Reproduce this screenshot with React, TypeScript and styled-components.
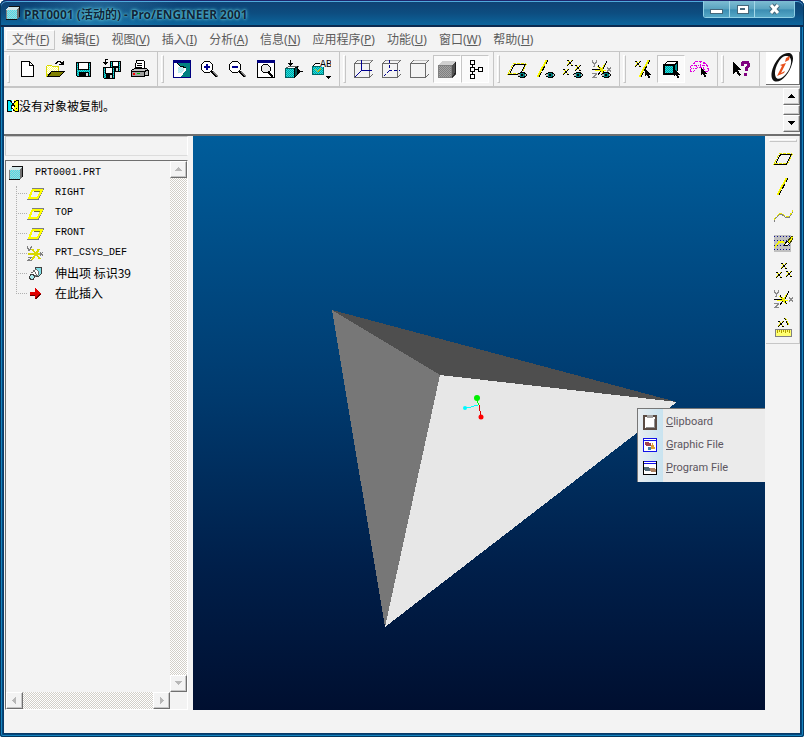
import React from "react";
import styled, { createGlobalStyle, css } from "styled-components";

const FACE = "#f3f3f3";
const SHADOW = "#c6c6c6";
const DARK = "#6f6f6f";
const UI_FONT = '"Noto Sans", "Noto Sans CJK SC", sans-serif';
const MONO_FONT = '"Liberation Mono", "Noto Sans CJK SC", monospace';

const GlobalStyle = createGlobalStyle`
  *, *::before, *::after { box-sizing: border-box; }
  body { margin: 0; background: #fff; }
  button { font: inherit; color: inherit; padding: 0; border: 0; background: none; }
  svg { display: block; }
`;

const raised = css`
  border: 1px solid;
  border-color: #fff ${DARK} ${DARK} #fff;
  box-shadow: inset -1px -1px 0 ${SHADOW};
`;

/* ---------- window frame ---------- */

const Frame = styled.div`
  min-height: 100vh;
  display: flex;
  flex-direction: column;
  padding: 0 4px 4px;
  border-radius: 6px 6px 3px 3px;
  background: linear-gradient(#0f3c6b, #0b5f97 24px, #063a68 80px);
  box-shadow: inset 0 0 0 1px #03365e, inset 0 0 0 2px #1784bf, inset 0 0 0 3px #04477b;
  overflow: hidden;
`;

const TitleBar = styled.header`
  height: 27px;
  flex: none;
  margin: 0 -3px;
  padding: 0 8px 0 5px;
  display: flex;
  align-items: center;
  border-top: 1px solid #20256b;
  border-bottom: 2px solid #0a2a50;
  border-radius: 6px 6px 0 0;
  box-shadow: inset 0 1px 0 #4fa9dc;
  background: linear-gradient(115deg, transparent 4%, rgba(90, 190, 230, 0.25) 12%, transparent 22%),
    linear-gradient(#0f4273, #0d4d80 50%, #0c659c);
`;

const Title = styled.h1`
  margin: 0 0 0 4px;
  padding-top: 3px;
  flex: 1;
  font: bold 12px/16px ${UI_FONT};
  color: #10263a;
  white-space: nowrap;
  text-shadow: 0 0 1px #5fc6d8, 0 0 3px #5fc6d8, 0 0 4px #48a8c4;
`;

const WindowControls = styled.div`
  display: flex;
  align-self: flex-start;
  height: 17px;
  border: 1px solid #8fd0e6;
  border-top: 0;
  border-radius: 0 0 3px 3px;
  overflow: hidden;
`;

const ControlButton = styled.button<{ $wide?: boolean }>`
  width: ${(p) => (p.$wide ? 40 : 25)}px;
  display: grid;
  place-items: center;
  background: linear-gradient(#7dbcd2, #5aa3c0 50%, #3b8db2 55%, #54a7c6);
  & + & { border-left: 1px solid #a4d8e8; }
`;

const Body = styled.div`
  flex: 1;
  display: flex;
  flex-direction: column;
  background: ${FACE};
`;

/* ---------- menu ---------- */

const MenuBar = styled.nav`
  height: 25px;
  flex: none;
  display: flex;
  align-items: center;
  padding: 2px 2px 0;
  border-bottom: 1px solid ${SHADOW};
  font: 12px/18px ${UI_FONT};
  color: #5c5c5c;
`;

const MenuItem = styled.button<{ $active?: boolean }>`
  height: 20px;
  padding: 0 5px;
  white-space: nowrap;
  border: 1px solid transparent;
  ${(p) => p.$active && css`border-color: #fff ${SHADOW} ${SHADOW} #fff;`}
`;

const Key = styled.u`
  text-underline-offset: 1px;
`;

/* ---------- toolbars ---------- */

const ToolBar = styled.div`
  height: 36px;
  flex: none;
  display: flex;
  align-items: stretch;
  border-bottom: 2px solid ${SHADOW};
`;

const ToolGroup = styled.div`
  display: flex;
  align-items: center;
  padding: 0 4px 0 3px;
  border-right: 1px solid ${SHADOW};
`;

const Grip = styled.span`
  width: 3px;
  height: 28px;
  margin-right: 3px;
  border: 1px solid;
  border-color: #fff ${SHADOW} ${SHADOW} #fff;
`;

const ToolButton = styled.button<{ $pressed?: boolean }>`
  width: 28px;
  height: 28px;
  display: grid;
  place-items: center;
  ${(p) =>
    p.$pressed &&
    css`
      background: #fafafa;
      border: 1px solid;
      border-color: ${SHADOW} #fff #fff ${SHADOW};
    `}
`;

const Logo = styled.div`
  width: 34px;
  margin: 0 0 1px auto;
  background: #fff;
  border-right: 1px solid ${DARK};
  border-bottom: 1px solid ${DARK};
`;

/* ---------- message area ---------- */

const MessageArea = styled.section`
  height: 48px;
  flex: none;
  display: flex;
  border-bottom: 2px solid ${DARK};
`;

const Message = styled.p`
  flex: 1;
  margin: 0;
  padding: 9px 0 0 3px;
  display: flex;
  align-items: flex-start;
  font: 12px/18px "Noto Sans CJK SC", sans-serif;
  color: #000;
  svg { margin: 3px 0 0; }
`;

const MessageScroll = styled.div`
  width: 17px;
  display: flex;
  flex-direction: column;
  padding-bottom: 2px;
`;

const ScrollThumb = styled.div`
  ${raised}
  flex: 1;
`;

const ArrowButton = styled.button`
  ${raised}
  width: 17px;
  height: 17px;
  flex: none;
  display: grid;
  place-items: center;
  background: ${FACE};
`;

/* ---------- workspace ---------- */

const Workspace = styled.main`
  flex: 1;
  display: flex;
  margin-bottom: 23px;
`;

const SidePanel = styled.aside`
  width: 183px;
  flex: none;
  margin: 0 5px 0 1px;
  display: flex;
  flex-direction: column;
  gap: 4px;
`;

const PanelHeader = styled.div`
  height: 20px;
  border: 1px solid;
  border-color: ${SHADOW} #fff #dcdcdc ${SHADOW};
`;

const TreeBox = styled.div`
  flex: 1;
  display: grid;
  grid-template: 1fr 17px / 1fr 17px;
  border: 1px solid;
  border-color: ${DARK} #fff #fff ${DARK};
`;

const dither = css`
  background: repeating-conic-gradient(#d2cfc8 0 25%, #fff 0 50%) 0 0 / 2px 2px;
`;

const ScrollBar = styled.div<{ $horizontal?: boolean }>`
  ${dither}
  display: flex;
  flex-direction: ${(p) => (p.$horizontal ? "row" : "column")};
  justify-content: space-between;
`;

const Tree = styled.ul`
  margin: 0;
  padding: 2px 0 0 3px;
  list-style: none;
  font: 10px/20px ${MONO_FONT};
  color: #000;
`;

const Branches = styled.ul`
  margin: 0 0 0 7px;
  padding: 0;
  list-style: none;
  position: relative;
  &::before {
    content: "";
    position: absolute;
    left: 0;
    top: 3px;
    bottom: 9px;
    border-left: 1px dotted #b0b0b0;
  }
`;

const Root = styled.div`
  display: flex;
  align-items: center;
  gap: 12px;
  height: 20px;
`;

const Branch = styled.li`
  display: flex;
  align-items: center;
  height: 20px;
  &::before {
    content: "";
    width: 11px;
    border-top: 1px dotted #b0b0b0;
  }
  svg { margin-right: 11px; }
`;

const Hanzi = styled.span`
  font: 12px/20px "Noto Sans CJK SC", sans-serif;
`;

const Viewport = styled.section`
  flex: 1;
  position: relative;
  background: linear-gradient(#005d9b, #003a6e 45%, #001f4a 75%, #000f30);
`;

const Scene = styled.svg`
  position: absolute;
  inset: 0;
  width: 100%;
  height: 100%;
`;

const ContextMenu = styled.menu`
  position: absolute;
  right: 0;
  top: 272px;
  width: 128px;
  margin: 0;
  padding: 1px 0 3px 1px;
  list-style: none;
  border-top: 1px solid #777;
  border-left: 1px solid #777;
  background: linear-gradient(90deg, #e9edf0 0, #c8e3f0 25px, #ebebeb 25px);
  font: 11px/23px Roboto, sans-serif;
  color: #5c5660;
`;

const ContextItem = styled.button`
  width: 100%;
  height: 23px;
  display: flex;
  align-items: center;
  gap: 8px;
  padding-left: 3px;
  text-align: left;
`;

const FeatureBar = styled.aside`
  width: 34px;
  flex: none;
  align-self: flex-start;
  display: flex;
  flex-direction: column;
  align-items: center;
  margin-left: 1px;
  padding: 3px 0 2px;
  border-right: 1px solid ${SHADOW};
  border-bottom: 1px solid ${SHADOW};
`;

const BarHandle = styled.span`
  width: 28px;
  height: 3px;
  margin-bottom: 3px;
  border: 1px solid;
  border-color: #fff ${SHADOW} ${SHADOW} #fff;
`;

/* ---------- icons ---------- */

const Icon = ({ children, size = 20 }: { children: React.ReactNode; size?: number }) => (
  <svg width={size} height={size} viewBox={`0 0 ${size} ${size}`} shapeRendering="crispEdges" fill="none" aria-hidden="true">
    {children}
  </svg>
);

const Patterns = () => (
  <svg width="0" height="0" aria-hidden="true">
    <defs>
      {[
        ["teal", "#00a0a0", "#20e0e0"],
        ["cyan", "#48dce6", "#a4d4da"],
        ["grey", "#808080", "#a4a4a4"],
        ["straw", "#ffff80", "#ffffff"],
      ].map(([id, a, b]) => (
        <pattern key={id} id={id} width="2" height="2" patternUnits="userSpaceOnUse">
          <path fill={b} d="M0 0h2v2H0z" />
          <path fill={a} d="M0 0h1v1H0zM1 1h1v1H1z" />
        </pattern>
      ))}
    </defs>
  </svg>
);

const HiddenDefs = styled.div`
  height: 0;
  overflow: hidden;
`;

const Eye = ({ x = 10, y = 13 }) => (
  <g>
    <path fill="#000" d={`M${x} ${y + 3}v-1h1v-1h2v-1h5v1h1v1h1v2h-1v1h-1v1h-5v-1h-2v-1z`} />
    <path fill="#c0c0c0" d={`M${x + 1} ${y + 2}h2v2h-2zM${x + 8} ${y + 2}h1v2h-1z`} />
    <path fill="#008080" d={`M${x + 3} ${y + 1}h4v1h1v2h-1v1h-4z`} />
    <path fill="#000" d={`M${x + 4} ${y + 2}h2v2h-2z`} />
  </g>
);

const Cursor = ({ x = 12, y = 10 }) => (
  <path fill="#000" d={`M${x} ${y}h1v1h1v1h1v1h1v1h1v1h1v1h-2v1h1v2h-2v-2h-1v-1h-1v1h-1z`} />
);

/** Datum point cross: black pixels with yellow ones between them. */
const Mark = ({ x, y }: { x: number; y: number }) => (
  <g>
    <path
      fill="#000"
      d={`M${x} ${y}h2v1h-2zM${x + 2} ${y + 2}h1v1h-1zM${x + 3} ${y + 3}h1v1h-1zM${x + 4} ${y + 5}h2v1h-2zM${x + 5} ${y}h1v1h-1zM${x + 3} ${y + 2}h1v-1h1v1h-1v1h-1zM${x} ${y + 5}h1v1h-1zM${x + 1} ${y + 4}h1v-1h1v1h-1v1h-1z`}
    />
    <path
      fill="#e8e800"
      d={`M${x + 1} ${y + 1}h1v1h-1zM${x + 4} ${y}h1v1h-1zM${x + 2} ${y + 1}h1v1h-1zM${x} ${y + 4}h1v1h-1zM${x + 1} ${y + 3}h1v1h-1zM${x + 4} ${y + 4}h1v1h-1z`}
    />
  </g>
);

const AxisLine = ({ x = 4, y = 1 }) => (
  <g>
    <path stroke="#ffff00" d={`M${x + 8} ${y}l-9 17`} />
    <path stroke="#e8e800" d={`M${x + 9} ${y}l-9 17`} />
    <path stroke="#000" strokeDasharray="5 2" d={`M${x + 10} ${y}l-9 17`} />
  </g>
);

const CsysShape = () => (
  <g>
    <path stroke="#8a8a8a" d="M1.500 1v2l2 2M5.500 1v2l-2 2v2H2M1 14.500h5M5.500 15l-4 4M1 18.500h5M16 8.500l4 4M20 8.500l-4 4" />
    <path stroke="#ffff00" d="M4 11.500h11M6.500 7.500l7 8M13.500 5l-6 11M9.500 8.500l4 4" />
    <path fill="#e8e800" d="M9 9h3v4H9z" />
    <path stroke="#000" d="M1 10.500h8M12 9.500l4-7M12 12.500l2.500 3M7 6.500l2.500 3M9.500 12.500l-3 4" />
  </g>
);

const PlaneShape = () => (
  <g>
    <path stroke="#000" d="M7 5.500h11M1 15.500h13M2.500 15l5-9.500M13.500 15l5-9.500" />
    <path stroke="#e8e800" strokeDasharray="3 1" d="M6 4.500h13M.5 16l5.500-11M2 14.500h11" />
    <path stroke="#e8e800" strokeDasharray="2 1" d="M14.500 15l5-10" />
  </g>
);

const Floppy = ({ x, y, s }: { x: number; y: number; s: number }) => {
  const half = Math.floor(s / 2);
  return (
    <g>
      <path fill="#000" d={`M${x} ${y}h${s}v${s}h${1 - s}v-1h-1z`} />
      <path fill="url(#teal)" d={`M${x + 1} ${y + 1}h${s - 2}v${s - 2}h${2 - s}z`} />
      <path fill="#000" d={`M${x + 2} ${y}h${s - 4}v${half + 1}h${4 - s}z`} />
      <path fill="#fff" d={`M${x + 3} ${y + 1}h${s - 6}v${half - 1}h${6 - s}z`} />
      <path fill="#000" d={`M${x + 3} ${y + s - 5}h${s - 5}v5h${5 - s}z`} />
      <path fill="#d8d8d8" d={`M${x + s - 5} ${y + s - 4}h2v3h-2z`} />
    </g>
  );
};

const Glass = ({ sign }: { sign: "plus" | "minus" }) => (
  <Icon>
    <path fill="#fff" stroke="#000" d="M5.500 2.500h5l3 3v5l-3 3h-5l-3-3v-5z" />
    <path stroke="#000090" strokeWidth="2" d={sign === "plus" ? "M5 8h6M8 5v6" : "M5 8h6"} />
    <path stroke="#000" strokeWidth="2" d="M12 12l6 6" />
    <path stroke="#808080" d="M14 12.500l5 5" />
  </Icon>
);

const CubeFrame = ({ children }: { children?: React.ReactNode }) => (
  <Icon>
    <path stroke="#6a6a6a" d="M1.500 4.500h15v14h-15zM1.500 4.500l3-3M16.500 4.500l3-3M16.500 18.500l3-3" />
    {children}
  </Icon>
);

const CubeSolid = () => (
  <Icon size={14}>
    <path fill="#d4e6e8" d="M0 3l3-2h11l-2 3H0z" />
    <path fill="url(#cyan)" d="M0 4h11v10H0z" />
    <path fill="#707070" d="M11 4l2-3v10l-2 3z" />
    <path stroke="#101010" d="M3 .5h10.500V11M0 13.500h11" />
    <path stroke="#808080" d="M.5 4v9" />
  </Icon>
);

const TreePlane = () => (
  <Icon size={17}>
    <path stroke="#808080" d="M5 3.500h11.500l-5 11H0" />
    <path stroke="#ffff00" strokeWidth="2" d="M5.500 5H15L10.500 13H2z" />
    <path stroke="#77773a" d="M7 6.500h6" />
  </Icon>
);

const icons: Record<string, React.ReactNode> = {
  new: (
    <Icon>
      <path fill="#fff" stroke="#000" d="M4.500 2.500h8l4 4v11h-12zM12.500 2.500v4h4" />
    </Icon>
  ),
  open: (
    <Icon>
      <path fill="url(#straw)" stroke="#d8d800" d="M1.500 17V7.500l1-1h4l1 1h6v5h-7z" />
      <path stroke="#000" d="M2 17.500h13" />
      <path fill="#808000" stroke="#000" d="M2.500 17.500l4-5h13l-5 5z" />
      <path stroke="#000" d="M10 4.500h1v-1h1v-1h3v1h2v2M14 5.500h5M16 4.500h3M18.500 2v4" />
    </Icon>
  ),
  save: <Icon><Floppy x={3} y={3} s={15} /></Icon>,
  saveAll: (
    <Icon>
      <Floppy x={9} y={2} s={11} />
      <Floppy x={2} y={8} s={12} />
      <path stroke="#000" d="M7 .5H4.500V6M2 3.500h5M3 4.500h3" />
    </Icon>
  ),
  print: (
    <Icon>
      <path fill="#fff" stroke="#000" d="M5.500 11l2-9.500h7l1 1v8.500z" />
      <path stroke="#000" d="M8 4.500h5M8 6.500h5M7 8.500h6" />
      <path fill="#c0c0c0" stroke="#000" d="M2.500 11.500l3-2h12l2 2v5h-17z" />
      <path fill="#a0a0a0" stroke="#000" d="M2.500 12.500h13v5h-13zM15.500 12.500l4-2" />
      <path fill="#f00" d="M4 14h2v2H4z" />
      <path fill="#00c000" d="M8 14h3v1H8z" />
    </Icon>
  ),
  repaint: (
    <Icon>
      <path fill="#008080" stroke="#000080" d="M2.500 2.500h17v16h-17z" />
      <path fill="#000080" d="M2 1h18v3H2z" />
      <path fill="#fff" d="M3 4h3l4 3 5 1v3l-5 7H3z" />
      <path fill="url(#cyan)" d="M7 8h6v3l-3 3H7z" opacity=".5" />
      <path stroke="#000" d="M6 4.500l4 3 5 1" />
    </Icon>
  ),
  zoomIn: <Glass sign="plus" />,
  zoomOut: <Glass sign="minus" />,
  refit: (
    <Icon>
      <path fill="#fff" stroke="#000" d="M2.500 2.500h17v16h-17z" />
      <path fill="#000080" d="M2 1h18v3H2z" />
      <path fill="#e8e8e8" stroke="#000" d="M8.500 5.500h4l3 3v3l-2 2h-5l-2-2v-4z" />
      <path stroke="#000" strokeWidth="2" d="M13 13l5 5" />
    </Icon>
  ),
  orient: (
    <Icon>
      <path fill="#fff" stroke="#606060" d="M2.500 9.500l3-2h10l-3 2z" />
      <path fill="url(#teal)" stroke="#006060" d="M2.500 9.500h9v9h-9z" />
      <path fill="#005050" stroke="#000" d="M11.500 9.500l3-2v8l-3 3z" />
      <path stroke="#000" d="M7.500 1v6M5 4.500h5M6 5.500h3M14 12.500h6M15.500 10v5M16.500 11v3" />
    </Icon>
  ),
  views: (
    <Icon>
      <path fill="#fff" stroke="#000" d="M1.500 7.500l3-3h6v3z" />
      <path fill="url(#teal)" stroke="#006868" d="M1.500 7.500h11v8h-11z" />
      <path stroke="#b0b020" d="M4 10.500l3 2 3-3" />
      <path fill="#f3f3f3" d="M9 0h11v8H9z" />
      <text x="9" y="8" fill="#000" fontFamily="Liberation Mono, monospace" fontSize="10">AB</text>
      <path fill="#000" d="M14 17h6l-3 3z" />
    </Icon>
  ),
  wire: (
    <CubeFrame>
      <path stroke="#a0a0a0" d="M5 1.500h14" />
      <path stroke="#000090" d="M8.500 1v10.500M8 11.500h11M8.500 11.500l-7 7" />
    </CubeFrame>
  ),
  hiddenLine: (
    <CubeFrame>
      <path stroke="#a0a0a0" d="M5 1.500h14" />
      <path stroke="#000090" strokeDasharray="3 2" d="M8.500 1v10.500M8 11.500h11M8.500 11.500l-7 7" />
    </CubeFrame>
  ),
  noHidden: <CubeFrame><path stroke="#c0c0c0" d="M5 1.500h14" /></CubeFrame>,
  shaded: (
    <Icon>
      <path fill="#d0d0d0" d="M1 6l4-4h14l-4 4z" />
      <path fill="url(#grey)" stroke="#808080" d="M1.500 6.500h13v12h-13z" />
      <path fill="#505050" d="M15 6l4-4v13l-4 4z" />
      <path stroke="#202020" d="M18.500 3v11l-3 4" />
    </Icon>
  ),
  tree: (
    <Icon>
      <path stroke="#000" fill="#fff" d="M5.500 1.500h4v4h-4zM5.500 8.500h4v4h-4zM5.500 15.500h4v4h-4zM13.500 8.500h4v4h-4z" />
      <path stroke="#000" d="M7.500 6v2M7.500 13v2M10 10.500h3" />
    </Icon>
  ),
  planeEye: <Icon><PlaneShape /><Eye /></Icon>,
  axisEye: <Icon><AxisLine x={3} /><Eye /></Icon>,
  pointsEye: <Icon><Mark x={4} y={1} /><Mark x={0} y={10} /><Mark x={12} y={6} /><Eye /></Icon>,
  csysEye: <Icon><CsysShape /><Eye /></Icon>,
  pickDatum: <Icon><Mark x={2} y={2} /><AxisLine x={7} /><Cursor /></Icon>,
  pickSolid: (
    <Icon>
      <path fill="#fff" stroke="#000" d="M2.500 6.500l4-4h10l-3 4z" />
      <path fill="#009090" stroke="#000" d="M13.500 6.500l3-4v9l-3 3z" />
      <path fill="url(#teal)" d="M3 6h11v9H3z" />
      <path stroke="#000" strokeWidth="2" d="M3 6h10v9H3z" />
      <Cursor x={13} y={10} />
    </Icon>
  ),
  pickSurface: (
    <Icon>
      <path stroke="#e000e0" strokeDasharray="3 1" d="M1.500 12.500v-5l5-5h7l5 4 1 6h-3l-3-4h-5l-4 4z" />
      <path stroke="#e000e0" strokeDasharray="1 1" d="M3 6.500h15M5 4l3 5M11.500 3v5M15 4l-1 5M2 9.500h5" />
      <Cursor x={12} y={9} />
    </Icon>
  ),
  help: (
    <Icon>
      <path fill="#000" d="M2 3l8 8H7l3 5-2 1-3-5-3 3z" />
      <path stroke="#800080" strokeWidth="3" d="M11 6.500V5l2-2h3l1.500 2v2L15 9.500V12" />
      <path fill="#800080" d="M13 14h3v3h-3z" />
    </Icon>
  ),
  plane: <Icon><PlaneShape /></Icon>,
  axis: <Icon><AxisLine x={5} /></Icon>,
  curve: (
    <Icon>
      <path stroke="#808080" d="M1 16.500v-1l5-6h3l4 3h3l4-6" />
      <path stroke="#e8e800" strokeDasharray="3 1" d="M1 14.500l5-6h3l4 3h3l4-6" />
    </Icon>
  ),
  sketch: (
    <Icon>
      <path fill="#c0c0c0" d="M1 2h17v17H1z" />
      <path stroke="#101090" strokeDasharray="1 2" d="M1 3.500h17M1 7.500h17M1 12.500h17M1 16.500h17" />
      <path stroke="#f8f800" d="M2 13.500l4-5h4l3 4M2 14.500l4-5h4" />
      <path fill="#f8f800" stroke="#404000" d="M14.500 8.500l4-5h2l-1 3-3 4z" />
      <path fill="#fff" stroke="#000" d="M11.500 12.500l1-3 2-1 2 2-2 2z" />
    </Icon>
  ),
  points: <Icon><Mark x={8} y={2} /><Mark x={3} y={11} /><Mark x={13} y={10} /></Icon>,
  csys: <Icon><CsysShape /></Icon>,
  analysis: (
    <Icon>
      <Mark x={5} y={4} />
      <path stroke="#000" strokeDasharray="2 1" d="M11.500 1l4 8" />
      <path stroke="#e8e800" strokeDasharray="2 1" d="M12.500 1l4 8" />
      <path fill="#ffff70" stroke="#808080" d="M2.500 12.500h16v7h-16z" />
      <path stroke="#b0a000" d="M4.500 13v3M6.500 13v2M8.500 13v3M10.500 13v2M12.500 13v3M14.500 13v2M16.500 13v3" />
    </Icon>
  ),
};

const LogoMark = () => (
  <svg width="33" height="32" viewBox="0 0 33 32" aria-label="Pro/ENGINEER">
    <path fill="#111" fillRule="evenodd" d="M18 2C25-1 29 3 26 12 23 23 14 32 8 29 3 26 6 14 12 7c2-3 4-4 6-5zM19 4C14 5 9 15 9 21c0 8 6 7 11 1 6-7 8-19-1-18z" />
    <path fill="#e8501c" d="M20 6l4-2-1 4-4 2zM14 13l6-2-5 10 4-2-1 2-7 3 5-10z" />
  </svg>
);

const Triangle = ({ d, tone = "#b8b8b8" }: { d: string; tone?: string }) => (
  <Icon size={9}><path fill={tone} d={d} /></Icon>
);

const UP = "M4 2h1l3 4H1z";
const DOWN = "M1 2h7L5 6H4z";

/* ---------- data ---------- */

const menus = [
  ["文件", "F"], ["编辑", "E"], ["视图", "V"], ["插入", "I"], ["分析", "A"],
  ["信息", "N"], ["应用程序", "P"], ["功能", "U"], ["窗口", "W"], ["帮助", "H"],
];

const groups = [
  ["new", "open", "save", "saveAll", "print"],
  ["repaint", "zoomIn", "zoomOut", "refit", "orient", "views"],
  ["wire", "hiddenLine", "noHidden", "shaded", "tree"],
  ["planeEye", "axisEye", "pointsEye", "csysEye"],
  ["pickDatum", "pickSolid", "pickSurface"],
  ["help"],
];

const pressed = new Set(["shaded", "tree", "pickSolid"]);
const features = ["plane", "axis", "curve", "sketch", "points", "csys", "analysis"];

const treeItems: { icon: React.ReactNode; label: React.ReactNode; id: string }[] = [
  { id: "right", icon: <TreePlane />, label: "RIGHT" },
  { id: "top", icon: <TreePlane />, label: "TOP" },
  { id: "front", icon: <TreePlane />, label: "FRONT" },
  {
    id: "csys",
    icon: (
      <Icon size={17}>
        <path stroke="#808080" d="M.5 1v2l1 1h2l1-3M3.500 4l-2 2M1 12.500h4l-4 3h4M13 7l3 4M16 7l-3 4" />
        <path stroke="#d8d800" strokeWidth="2" d="M1 9h12M5 4l8 10M12 4L5 15" />
      </Icon>
    ),
    label: "PRT_CSYS_DEF",
  },
  {
    id: "extrude",
    icon: (
      <Icon size={17}>
        <path fill="#7fe0e8" stroke="#404040" d="M8.500 2.500h6v6l-3 3h-3z" />
        <path fill="#fff" stroke="#707070" d="M6.500 5.500l3-1 2 2v3l-3 2M4.500 7.500l3-1 2 3-2 3-3 1" />
        <path fill="#a8ecf0" stroke="#404040" d="M3.500 9.500h3l1 2-1 3h-3l-1-2z" />
      </Icon>
    ),
    label: <Hanzi>伸出项 标识39</Hanzi>,
  },
  {
    id: "insert",
    icon: (
      <Icon size={17}>
        <path fill="#e00000" d="M3 7h5V3l6 5.500-6 5.500v-4H3z" />
        <path stroke="#600000" d="M3 10.500h5M8.500 14l5-5" />
      </Icon>
    ),
    label: <Hanzi>在此插入</Hanzi>,
  },
];

const clipIcons: React.ReactNode[] = [
  <Icon size={16} key="c">
    <path fill="#5a4c44" d="M1 1h14v15H1z" />
    <path fill="#fff" d="M3 3h10v11H3z" />
    <path fill="#a0a0a0" d="M5 1h6v3H5z" />
    <path stroke="#909090" d="M4 13.500h8.500V5" />
  </Icon>,
  <Icon size={16} key="g">
    <path fill="#fff" stroke="#1010e8" d="M1.500 1.500h13v13h-13z" />
    <path fill="#1010e8" d="M1 1h14v1H1zM1 3h14v1H1z" />
    <path fill="#a04050" d="M3 5h4v1h2v3H4V8H3z" />
    <path fill="#e0a030" d="M10 6h1v2h1v2h1v2H7v-2h2V8h1z" />
    <path fill="#4080b0" d="M6 10h3v3H6z" />
  </Icon>,
  <Icon size={16} key="p">
    <path fill="#fff" stroke="#000" d="M1.500 1.500h13v13h-13z" />
    <path fill="#1010e8" d="M2 1h12v1H2zM2 3h12v1H2z" />
    <path fill="#506878" d="M2 7h5v1h1v3H3v-1H2z" />
    <path fill="#a88060" d="M8 8h5v1h1v3H9v-1H8z" />
  </Icon>,
];

const contextItems = ["Clipboard", "Graphic File", "Program File"];

/* ---------- app ---------- */

export default function App() {
  return (
    <Frame>
      <GlobalStyle />
      <HiddenDefs><Patterns /></HiddenDefs>
      <TitleBar>
        <CubeSolid />
        <Title>PRT0001 (活动的) - Pro/ENGINEER 2001</Title>
        <WindowControls>
          <ControlButton aria-label="Minimize">
            <Icon size={13}><path fill="#fff" stroke="#45677a" d="M.5 6.500h12v4H.5z" /></Icon>
          </ControlButton>
          <ControlButton aria-label="Maximize">
            <Icon size={13}><path stroke="#45677a" strokeWidth="5" d="M3 4h7v4H3z" /><path stroke="#fff" strokeWidth="3" d="M3 4h7v4H3z" /><path fill="#45677a" d="M4 5h5v2H4z" /></Icon>
          </ControlButton>
          <ControlButton aria-label="Close" $wide>
            <svg width="13" height="13" viewBox="0 0 13 13">
              <path stroke="#45677a" strokeWidth="5" d="M3 2l7 8M10 2l-7 8" />
              <path stroke="#fff" strokeWidth="3" d="M3 2l7 8M10 2l-7 8" />
            </svg>
          </ControlButton>
        </WindowControls>
      </TitleBar>
      <Body>
        <MenuBar>
          {menus.map(([label, key], i) => (
            <MenuItem key={key} $active={i === 0}>{label}(<Key>{key}</Key>)</MenuItem>
          ))}
        </MenuBar>
        <ToolBar>
          {groups.map((names) => (
            <ToolGroup key={names[0]}>
              <Grip />
              {names.map((n) => (
                <ToolButton key={n} aria-label={n} $pressed={pressed.has(n)}>{icons[n]}</ToolButton>
              ))}
            </ToolGroup>
          ))}
          <Logo><LogoMark /></Logo>
        </ToolBar>
        <MessageArea>
          <Message>
            <Icon size={12}>
              <path fill="#00e8f8" d="M0 0h6v12H0z" />
              <path fill="#ffff00" d="M7 0h5v12H7z" />
              <path fill="#fff" d="M5 0h2v12H5z" />
              <path stroke="#000" d="M0 .5h4M.5 0v12M0 11.500h5M9 .5h3M11.500 0v12M8 11.500h4" />
              <path stroke="#000" strokeDasharray="2 1" d="M3.500 1l3 3-3 3 5 5M8.500 1l-3 3 3 3 2 3" />
            </Icon>
            没有对象被复制。
          </Message>
          <MessageScroll>
            <ArrowButton aria-label="Previous message"><Triangle d={UP} tone="#000" /></ArrowButton>
            <ScrollThumb />
            <ArrowButton aria-label="Next message"><Triangle d={DOWN} tone="#000" /></ArrowButton>
          </MessageScroll>
        </MessageArea>
        <Workspace>
          <SidePanel>
            <PanelHeader />
            <TreeBox>
              <Tree>
                <li>
                  <Root><CubeSolid />PRT0001.PRT</Root>
                  <Branches>
                    {treeItems.map((t) => (
                      <Branch key={t.id}>{t.icon}{t.label}</Branch>
                    ))}
                  </Branches>
                </li>
              </Tree>
              <ScrollBar>
                <ArrowButton aria-label="Scroll up"><Triangle d={UP} /></ArrowButton>
                <ArrowButton aria-label="Scroll down"><Triangle d={DOWN} /></ArrowButton>
              </ScrollBar>
              <ScrollBar $horizontal>
                <ArrowButton aria-label="Scroll left"><Triangle d="M6 1v7L2 5V4z" /></ArrowButton>
                <ArrowButton aria-label="Scroll right"><Triangle d="M3 1v7l4-3V4z" /></ArrowButton>
              </ScrollBar>
            </TreeBox>
          </SidePanel>
          <Viewport>
            <Scene viewBox="0 0 572 574" aria-label="Shaded solid">
              <g shapeRendering="crispEdges" fill="none">
                <path fill="#4e4e4e" d="M139 174L484 266 247 239z" />
                <path fill="#777777" d="M139 174L247 239 192 491z" />
                <path fill="#e7e7e7" d="M247 239L484 266 192 491z" />
                <path stroke="#00ff00" d="M284 262l1.500 7" />
                <path stroke="#00ffff" d="M272 271.500h4l9-2.500" />
                <path stroke="#e00000" d="M286.500 269l1 12" />
              </g>
              <circle cx="284" cy="262" r="3" fill="#00f000" />
              <circle cx="272" cy="272" r="2" fill="#00f8ff" />
              <circle cx="288" cy="281" r="2.500" fill="#ff0000" />
            </Scene>
            <ContextMenu>
              {contextItems.map((label, i) => (
                <li key={label}>
                  <ContextItem>
                    {clipIcons[i]}
                    <span><Key>{label[0]}</Key>{label.slice(1)}</span>
                  </ContextItem>
                </li>
              ))}
            </ContextMenu>
          </Viewport>
          <FeatureBar>
            <BarHandle />
            {features.map((n) => (
              <ToolButton key={n} aria-label={n}>{icons[n]}</ToolButton>
            ))}
          </FeatureBar>
        </Workspace>
      </Body>
    </Frame>
  );
}
